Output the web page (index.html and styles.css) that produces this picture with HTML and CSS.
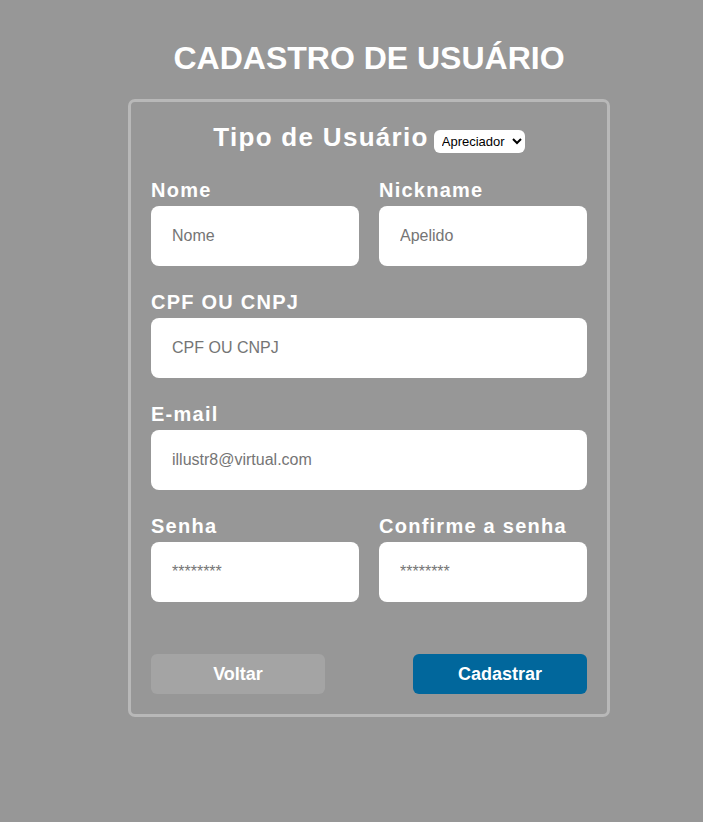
FILE: index.html
```html
<!DOCTYPE html>
<html lang="pt-BR">
<head>
<meta charset="utf-8">
<title>Cadastro de Usuário</title>
<link rel="stylesheet" href="styles.css">
</head>
<body>
<main class="page">
  <h1 class="title">CADASTRO DE USUÁRIO</h1>
  <form class="card">
    <div class="type-row">
      <h2 class="type-title">Tipo de Usuário</h2>
      <select class="type-select"><option>Apreciador</option></select>
    </div>
    <div class="row two first">
      <div class="field">
        <label class="label">Nome</label>
        <input class="input" placeholder="Nome">
      </div>
      <div class="field">
        <label class="label">Nickname</label>
        <input class="input" placeholder="Apelido">
      </div>
    </div>
    <div class="row">
      <div class="field">
        <label class="label">CPF OU CNPJ</label>
        <input class="input" placeholder="CPF OU CNPJ">
      </div>
    </div>
    <div class="row">
      <div class="field">
        <label class="label">E-mail</label>
        <input class="input" placeholder="illustr8@virtual.com">
      </div>
    </div>
    <div class="row two">
      <div class="field">
        <label class="label">Senha</label>
        <input class="input" placeholder="********">
      </div>
      <div class="field">
        <label class="label">Confirme a senha</label>
        <input class="input" placeholder="********">
      </div>
    </div>
    <div class="actions">
      <button type="button" class="btn back">Voltar</button>
      <button type="button" class="btn submit">Cadastrar</button>
    </div>
  </form>
</main>
</body>
</html>
```
FILE: styles.css
```css
* { box-sizing: border-box; }
html, body { margin: 0; padding: 0; }
body {
  background: #979797;
  font-family: "Liberation Sans", Arial, sans-serif;
  color: #fff;
  min-height: 822px;
}
.page {
  display: flex;
  flex-direction: column;
  align-items: center;
  padding-top: 40px;
  padding-left: 35px;
}
.title {
  margin: 0 0 22px 0;
  font-size: 32px;
  font-weight: bold;
  line-height: 37px;
}
.card {
  width: 482px;
  border: 3px solid #b8b8b8;
  border-radius: 7px;
  padding: 18px 20px 20px 20px;
}
.type-row {
  display: flex;
  justify-content: center;
  align-items: center;
  gap: 5px;
}
.type-title {
  margin: 0;
  font-size: 26px;
  letter-spacing: 1.3px;
  line-height: 34px;
}
.type-select {
  font-family: "Liberation Sans", Arial, sans-serif;
  font-size: 13px;
  height: 23px;
  border: none;
  border-radius: 6px;
  background: #fff;
  color: #000;
  padding: 0 4px 0 4px;
  margin-top: 8px;
}
.row {
  display: grid;
  grid-template-columns: minmax(0, 1fr);
  margin-top: 25px;
}
.row.two {
  grid-template-columns: minmax(0, 1fr) minmax(0, 1fr);
  column-gap: 20px;
}
.row.first { margin-top: 25px; }
.field {
  display: flex;
  flex-direction: column;
  min-width: 0;
}
.label {
  font-size: 20px;
  font-weight: bold;
  letter-spacing: 1.25px;
  line-height: 23px;
  margin-bottom: 4px;
  white-space: nowrap;
}
.input {
  width: 100%;
  min-width: 0;
  height: 60px;
  border: none;
  border-radius: 8px;
  background: #fff;
  padding: 0 21px;
  font-family: "Liberation Sans", Arial, sans-serif;
  font-size: 16px;
  color: #333;
}
.input::placeholder { color: #757575; }
.actions {
  display: flex;
  justify-content: space-between;
  margin-top: 52px;
}
.btn {
  width: 174px;
  height: 40px;
  border: none;
  border-radius: 6px;
  color: #fff;
  font-family: "Liberation Sans", Arial, sans-serif;
  font-size: 18px;
  font-weight: bold;
}
.back { background: #a4a4a4; }
.submit { background: #01679c; }
```
